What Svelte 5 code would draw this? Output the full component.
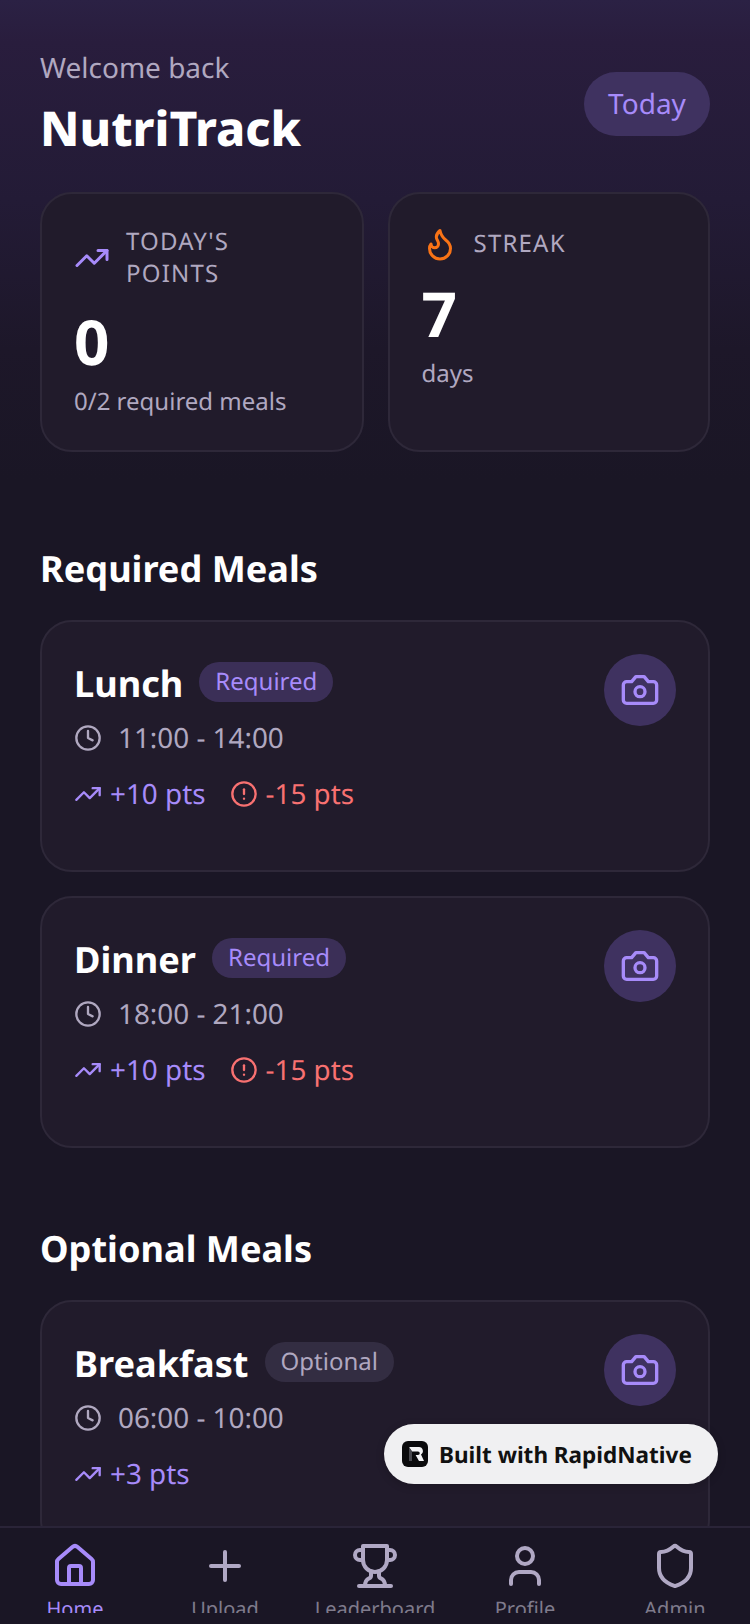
<script>
	const required = [
		{ name: 'Lunch', time: '11:00 - 14:00', plus: 10, minus: 15 },
		{ name: 'Dinner', time: '18:00 - 21:00', plus: 10, minus: 15 }
	];
	const optional = [{ name: 'Breakfast', time: '06:00 - 10:00', plus: 3 }];
	const tabs = ['Home', 'Upload', 'Leaderboard', 'Profile', 'Admin'];
</script>

{#snippet trend(size)}
	<svg class="icon" width={size} height={size} viewBox="0 0 24 24">
		<polyline points="22 7 13.5 15.5 8.5 10.5 2 17" />
		<polyline points="16 7 22 7 22 13" />
	</svg>
{/snippet}

{#snippet mealCard(meal, tag)}
	<article class="meal">
		<div class="meal-info">
			<div class="meal-title">
				<h3>{meal.name}</h3>
				<span class="tag" class:opt={tag === 'Optional'}>{tag}</span>
			</div>
			<div class="time">
				<svg class="icon" width="28" height="28" viewBox="0 0 24 24">
					<circle cx="12" cy="12" r="10" />
					<polyline points="12 6 12 12 16 14" />
				</svg>
				<span>{meal.time}</span>
			</div>
			<div class="points">
				<span class="pts plus">{@render trend(28)}+{meal.plus} pts</span>
				{#if meal.minus}
					<span class="pts minus">
						<svg class="icon" width="28" height="28" viewBox="0 0 24 24">
							<circle cx="12" cy="12" r="10" />
							<line x1="12" y1="8" x2="12" y2="12" />
							<line x1="12" y1="16" x2="12.01" y2="16" />
						</svg>
						-{meal.minus} pts
					</span>
				{/if}
			</div>
		</div>
		<button class="cam" type="button" aria-label="Upload photo">
			<svg class="icon" width="40" height="40" viewBox="0 0 24 24">
				<path d="M14.5 4h-5L7 7H4a2 2 0 0 0-2 2v9a2 2 0 0 0 2 2h16a2 2 0 0 0 2-2V9a2 2 0 0 0-2-2h-3l-2.5-3z" />
				<circle cx="12" cy="13" r="3" />
			</svg>
		</button>
	</article>
{/snippet}

<div class="screen">
	<main class="scroll">
		<header class="top">
			<div>
				<p class="welcome">Welcome back</p>
				<h1>NutriTrack</h1>
			</div>
			<span class="today">Today</span>
		</header>

		<section class="stats">
			<div class="stat">
				<div class="stat-head">
					<span class="trend-purple">{@render trend(36)}</span>
					<span class="stat-label">TODAY'S POINTS</span>
				</div>
				<div class="stat-num">0</div>
				<div class="stat-sub">0/2 required meals</div>
			</div>
			<div class="stat">
				<div class="stat-head">
					<svg class="icon flame" width="36" height="36" viewBox="0 0 24 24">
						<path d="M8.5 14.5A2.5 2.5 0 0 0 11 12c0-1.38-.5-2-1-3-1.072-2.143-.224-4.054 2-6 .5 2.5 2 4.9 4 6.5 2 1.6 3 3.5 3 5.5a7 7 0 1 1-14 0c0-1.153.433-2.294 1-3a2.5 2.5 0 0 0 2.5 2.5z" />
					</svg>
					<span class="stat-label">STREAK</span>
				</div>
				<div class="stat-num">7</div>
				<div class="stat-sub">days</div>
			</div>
		</section>

		<h2>Required Meals</h2>
		<div class="list">
			{#each required as meal}
				{@render mealCard(meal, 'Required')}
			{/each}
		</div>

		<h2 class="second">Optional Meals</h2>
		<div class="list">
			{#each optional as meal}
				{@render mealCard(meal, 'Optional')}
			{/each}
		</div>
	</main>

	<nav class="tabbar">
		<div class="tabs">
			{#each tabs as tab, i}
				<div class="tab" class:active={i === 0}>
					<svg class="icon" width="48" height="48" viewBox="0 0 24 24">
						{#if i === 0}
							<path d="M15 21v-8a1 1 0 0 0-1-1h-4a1 1 0 0 0-1 1v8" />
							<path d="M3 10a2 2 0 0 1 .709-1.528l7-5.999a2 2 0 0 1 2.582 0l7 5.999A2 2 0 0 1 21 10v9a2 2 0 0 1-2 2H5a2 2 0 0 1-2-2z" />
						{:else if i === 1}
							<path d="M5 12h14" />
							<path d="M12 5v14" />
						{:else if i === 2}
							<path d="M6 9H4.5a2.5 2.5 0 0 1 0-5H6" />
							<path d="M18 9h1.5a2.5 2.5 0 0 0 0-5H18" />
							<path d="M4 22h16" />
							<path d="M10 14.66V17c0 .55-.47.98-.97 1.21C7.85 18.75 7 20.24 7 22" />
							<path d="M14 14.66V17c0 .55.47.98.97 1.21C16.15 18.75 17 20.24 17 22" />
							<path d="M18 2H6v7a6 6 0 0 0 12 0V2Z" />
						{:else if i === 3}
							<path d="M19 21v-2a4 4 0 0 0-4-4H9a4 4 0 0 0-4 4v2" />
							<circle cx="12" cy="7" r="4" />
						{:else}
							<path d="M20 13c0 5-3.5 7.5-7.66 8.95a1 1 0 0 1-.67-.01C7.5 20.5 4 18 4 13V6a1 1 0 0 1 1-1c2 0 4.5-1.2 6.24-2.72a1.17 1.17 0 0 1 1.52 0C14.51 3.81 17 5 19 5a1 1 0 0 1 1 1z" />
						{/if}
					</svg>
					<span>{tab}</span>
				</div>
			{/each}
		</div>
	</nav>

	<div class="built">
		<svg width="26" height="26" viewBox="0 0 26 26" aria-hidden="true">
			<rect width="26" height="26" rx="6" fill="#0b0b0d" />
			<path d="M7 6h10a4 4 0 0 1 2 7.4L22 20h-5l-3.4-6H16a1.5 1.5 0 0 0 0-3.5H10z" fill="#f4f4f6" />
			<path d="M7 6l3 4.5V20H7z" fill="#4a4a50" />
		</svg>
		<span>Built with RapidNative</span>
	</div>
</div>

<style>
	:global(body) {
		background: #1a1625;
	}

	.screen {
		position: relative;
		display: flex;
		flex-direction: column;
		width: 750px;
		height: 1624px;
		overflow: hidden;
		font-family: 'Noto Sans', sans-serif;
		text-rendering: geometricPrecision;
		color: #fff;
		background: linear-gradient(180deg, #2b2144 0, #291d3d 42px, #231b36 200px, #1d1729 350px, #1a1625 480px);
	}

	.scroll {
		flex: 1;
		min-height: 0;
		overflow: hidden;
		padding: 50px 40px 0;
	}

	.icon {
		fill: none;
		stroke: currentColor;
		stroke-width: 2;
		stroke-linecap: round;
		stroke-linejoin: round;
		flex-shrink: 0;
		display: block;
	}

	.top {
		display: flex;
		align-items: center;
		justify-content: space-between;
	}

	.welcome {
		margin: 0;
		font-size: 28px;
		line-height: 36px;
		color: #b0a8c0;
	}

	h1 {
		margin: 11px 0 0;
		font-size: 48px;
		line-height: 64px;
		font-weight: 800;
	}

	.today {
		width: 126px;
		height: 64px;
		margin-bottom: 3px;
		display: flex;
		align-items: center;
		justify-content: center;
		border-radius: 32px;
		background: #3f3260;
		color: #a78bfa;
		font-size: 28px;
	}

	.stats {
		display: grid;
		grid-template-columns: 323.5px 322.5px;
		gap: 24px;
		margin-top: 31px;
	}

	.stat {
		height: 260px;
		box-sizing: border-box;
		padding: 32px;
		border: 2px solid #2e2839;
		border-radius: 32px;
		background: #211b2b;
	}

	.stat-head {
		display: flex;
		align-items: center;
		gap: 16px;
		margin-bottom: 14px;
	}

	.trend-purple {
		color: #a78bfa;
	}

	.flame {
		color: #f97316;
	}

	.stat-label {
		margin: 0 0 0;
		font-size: 24px;
		line-height: 32px;
		letter-spacing: 1.2px;
		color: #b0a8c0;
		max-width: 160px;
	}

	.stat-num {
		font-size: 62px;
		line-height: 76px;
		font-weight: 700;
	}

	.stat-sub {
		font-size: 24px;
		line-height: 40px;
		margin-top: 2px;
		color: #b0a8c0;
	}

	h2 {
		margin: 92px 0 28px;
		font-size: 36.15px;
		line-height: 48px;
		font-weight: 700;
	}

	h2.second {
		margin: 76px 0 28px;
	}

	.list {
		display: flex;
		flex-direction: column;
		gap: 24px;
	}

	.meal {
		flex: none;
		height: 252px;
		box-sizing: border-box;
		display: flex;
		justify-content: space-between;
		align-items: flex-start;
		padding: 32px;
		border: 2px solid #2e2839;
		border-radius: 32px;
		background: #211b2b;
	}

	.meal-title {
		display: flex;
		align-items: center;
		gap: 16px;
		height: 56px;
	}

	h3 {
		margin: 2px 0 0;
		font-size: 36.15px;
		line-height: 48px;
		font-weight: 700;
	}

	.tag {
		padding: 4px 16px;
		border-radius: 20px;
		font-size: 24px;
		line-height: 32px;
		background: #3b2f57;
		color: #a78bfa;
	}

	.tag.opt {
		background: #332d42;
		color: #b0a8c0;
	}

	.time {
		display: flex;
		align-items: center;
		gap: 16px;
		margin-top: 8px;
		font-size: 27.85px;
		line-height: 40px;
		color: #b0a8c0;
	}

	.points {
		display: flex;
		align-items: center;
		gap: 24px;
		margin-top: 16px;
		font-size: 27.85px;
		line-height: 40px;
	}

	.pts {
		display: flex;
		align-items: center;
		gap: 8px;
	}

	.plus {
		color: #a78bfa;
	}

	.minus {
		color: #f87171;
	}

	.cam {
		width: 72px;
		height: 72px;
		padding: 0;
		border: 0;
		border-radius: 50%;
		display: flex;
		align-items: center;
		justify-content: center;
		background: #3f3260;
		color: #a78bfa;
	}

	.tabbar {
		flex: none;
		height: 98px;
		box-sizing: border-box;
		border-top: 2px solid #2a2438;
		background: #1a1625;
	}

	.tabs {
		display: grid;
		grid-template-columns: repeat(5, 1fr);
		height: 85px;
		overflow: hidden;
	}

	.tab {
		display: flex;
		flex-direction: column;
		align-items: center;
		padding-top: 14px;
		color: #b0a8c4;
	}

	.tab span {
		font-size: 20px;
		line-height: 28px;
		margin-top: 5px;
		color: #7f7b8c;
		white-space: nowrap;
	}

	.tab.active {
		color: #a78bfa;
	}

	.tab.active span {
		color: #a78bfa;
	}

	.built {
		position: absolute;
		left: 384px;
		top: 1424px;
		width: 334px;
		height: 60px;
		box-sizing: border-box;
		display: flex;
		align-items: center;
		gap: 11px;
		padding-left: 18px;
		border-radius: 30px;
		background: #f0f0f2;
		color: #111;
		font-size: 22.5px;
		font-weight: 700;
		box-shadow: 0 2px 8px rgba(0, 0, 0, 0.2);
	}
</style>
